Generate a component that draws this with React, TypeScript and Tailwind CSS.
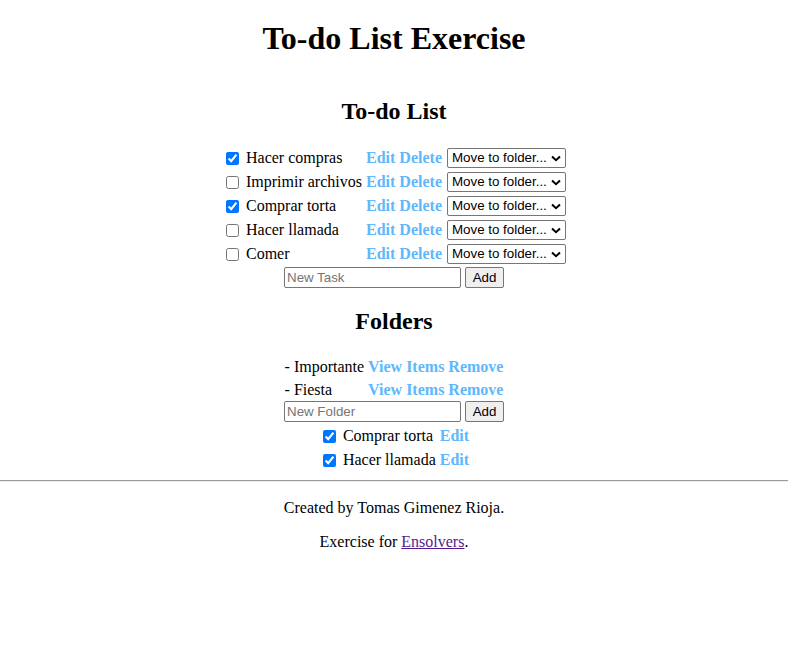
import React from "react";

const serif = { fontFamily: '"Liberation Serif", "Times New Roman", serif' };
const sans = '"Liberation Sans", Arial, sans-serif';

function Select() {
  return (
    <div
      className="relative flex items-center w-[119px] h-[20px] border border-[#767676] rounded-[2px] bg-white text-[13.33px] leading-none text-black pl-[4px]"
      style={{ fontFamily: sans }}
    >
      <span>Move to folder...</span>
      <svg
        className="absolute right-[4px] top-[6px]"
        width="10"
        height="7"
        viewBox="0 0 10 7"
      >
        <path d="M1 1.5 L5 5.2 L9 1.5" fill="none" stroke="#000" strokeWidth="2" />
      </svg>
    </div>
  );
}

function TextInput({ placeholder }: { placeholder: string }) {
  return (
    <input
      type="text"
      placeholder={placeholder}
      className="w-[177px] h-[21px] border border-[#767676] rounded-[2px] px-[2px] text-[13.33px] leading-none placeholder:text-[#757575] bg-white outline-none"
      style={{ fontFamily: sans }}
    />
  );
}

function AddButton() {
  return (
    <button
      className="w-[39px] h-[21px] border border-[#767676] rounded-[2px] bg-[#efefef] text-[13.33px] leading-none text-black"
      style={{ fontFamily: sans }}
    >
      Add
    </button>
  );
}

const link = "font-bold text-[#5db8fe] cursor-pointer";

const tasks = [
  { name: "Hacer compras", done: true },
  { name: "Imprimir archivos", done: false },
  { name: "Comprar torta", done: true },
  { name: "Hacer llamada", done: false },
  { name: "Comer", done: false },
];

export default function App() {
  return (
    <div className="bg-white min-h-[646px] w-[788px] text-black text-[16px] leading-[1.15]" style={serif}>
      <h1 className="pt-[20px] text-[32px] font-bold leading-[37px] text-center">
        To-do List Exercise
      </h1>

      <h2 className="mt-[41px] text-[24px] font-bold leading-[27.6px] text-center">
        To-do List
      </h2>

      <table className="mx-auto mt-[19.5px] border-separate border-spacing-[2px] table-fixed w-[350px]">
        <tbody>
          {tasks.map((t) => (
            <tr key={t.name}>
              <td className="p-[1px] h-[22px] w-[142px] align-middle">
                <div className="flex items-center h-[20px]">
                  <input
                    type="checkbox"
                    defaultChecked={t.done}
                    className="w-[13px] h-[13px] ml-[4px] mr-[3px] my-0"
                  />
                  <span className="ml-[4px] whitespace-nowrap leading-[18px]">{t.name}</span>
                </div>
              </td>
              <td className="p-[1px] h-[22px] w-[79px] align-middle whitespace-nowrap leading-[18px]">
                <span className={link}>Edit</span> <span className={link}>Delete</span>
              </td>
              <td className="p-[1px] h-[22px] w-[121px] align-middle">
                <Select />
              </td>
            </tr>
          ))}
        </tbody>
      </table>

      <div className="flex justify-center gap-[4px] mt-[0px]">
        <TextInput placeholder="New Task" />
        <AddButton />
      </div>

      <h2 className="mt-[20px] text-[24px] font-bold leading-[27.6px] text-center">
        Folders
      </h2>

      <table className="mx-auto mt-[19.5px] border-separate border-spacing-[2px]">
        <tbody>
          {["Importante", "Fiesta"].map((f) => (
            <tr key={f}>
              <td className="p-[1px] leading-[18.4px] whitespace-nowrap">- {f}</td>
              <td className="p-[1px] leading-[18.4px] whitespace-nowrap">
                <span className={link}>View Items</span> <span className={link}>Remove</span>
              </td>
            </tr>
          ))}
        </tbody>
      </table>

      <div className="flex justify-center gap-[4px] mt-[-1px]">
        <TextInput placeholder="New Folder" />
        <AddButton />
      </div>

      <table className="mx-auto mt-[1px] border-separate border-spacing-[2px]">
        <tbody>
          {["Comprar torta", "Hacer llamada"].map((n) => (
            <tr key={n}>
              <td className="p-[1px] h-[22px] align-middle">
                <div className="flex items-center h-[20px]">
                  <input
                    type="checkbox"
                    defaultChecked
                    className="w-[13px] h-[13px] ml-[4px] mr-[3px] my-0"
                  />
                  <span className="ml-[4px] whitespace-nowrap leading-[18px]">{n}</span>
                </div>
              </td>
              <td className="p-[1px] h-[22px] align-middle leading-[18px]">
                <span className={link}>Edit</span>
              </td>
            </tr>
          ))}
        </tbody>
      </table>

      <hr className="mt-[7px] border-0 border-t border-t-[#9a9a9a] border-b border-b-[#eeeeee]" />

      <p className="mt-[17px] leading-[18.4px] text-center">Created by Tomas Gimenez Rioja.</p>
      <p className="mt-[16px] leading-[18.4px] text-center">
        Exercise for{" "}
        <a className="text-[#551a8b] underline cursor-pointer">Ensolvers</a>.
      </p>
    </div>
  );
}
